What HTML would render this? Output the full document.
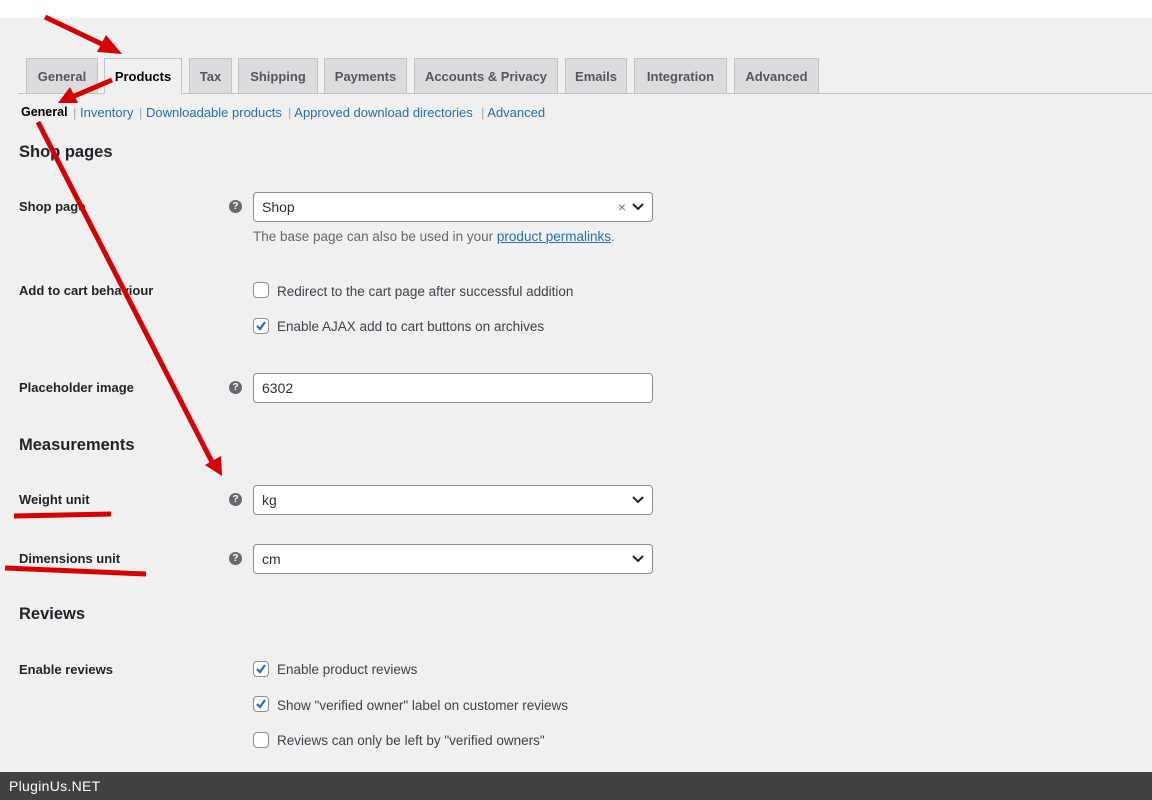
<!DOCTYPE html>
<html><head><meta charset="utf-8"><style>
*{box-sizing:border-box;margin:0;padding:0}
body{width:1152px;height:800px;position:relative;overflow:hidden;background:#fff;font-family:"Liberation Sans",sans-serif;color:#1d2327;font-size:13px}
.bg{position:absolute;left:0;top:18px;width:1152px;height:754px;background:#f0f0f1}
.a{position:absolute;white-space:nowrap}
.tab{position:absolute;top:58px;height:35px;background:#dcdcde;border:1px solid #c3c4c7;border-bottom:none;color:#50575e;font-weight:bold;font-size:13px;text-align:center;line-height:35px}
.tab.on{background:#f0f0f1;color:#000;height:36px;z-index:2}
.line{position:absolute;left:18px;top:93px;width:1134px;height:1px;background:#c3c4c7}
.sub{position:absolute;top:105px;font-size:13px;color:#2271b1}
.h2{position:absolute;left:19px;font-size:16.5px;font-weight:600;color:#1d2327}
.lbl{position:absolute;left:19px;font-size:13px;font-weight:bold;color:#1d2327}
.q{position:absolute;left:229px;width:13px;height:13px;border-radius:50%;background:#646970;color:#fff;font-size:10px;font-weight:bold;text-align:center;line-height:13px}
.inp{position:absolute;left:253px;width:400px;height:30px;background:#fff;border:1px solid #8c8f94;border-radius:4px;font-size:14px;line-height:28px;padding-left:8px;color:#2c3338}
.chev{position:absolute;right:8px;top:10px}
.cb{position:absolute;left:253px;width:16px;height:16px;background:#fff;border:1px solid #8c8f94;border-radius:4px}
.cbt{position:absolute;left:277px;font-size:13.5px;color:#3c434a}
.foot{position:absolute;left:0;top:772px;width:1152px;height:28px;background:#414141;color:#fff;font-size:14px;line-height:28px;padding-left:9px;letter-spacing:.3px}
</style></head><body>
<div class="bg"></div>
<div class="tab" style="left:26px;width:72px">General</div>
<div class="tab on" style="left:104px;width:78px">Products</div>
<div class="tab" style="left:189px;width:43px">Tax</div>
<div class="tab" style="left:238px;width:80px">Shipping</div>
<div class="tab" style="left:324px;width:83px">Payments</div>
<div class="tab" style="left:414px;width:144px">Accounts &amp; Privacy</div>
<div class="tab" style="left:565px;width:62px">Emails</div>
<div class="tab" style="left:634px;width:93px">Integration</div>
<div class="tab" style="left:734px;width:85px">Advanced</div>
<div class="line"></div>
<div class="sub" style="left:21px;color:#000;font-weight:bold;font-size:12.5px">General</div>
<div class="sub" style="left:73px"><span style="color:#a7aaad">|</span> Inventory</div>
<div class="sub" style="left:139px"><span style="color:#a7aaad">|</span> Downloadable products</div>
<div class="sub" style="left:288px"><span style="color:#a7aaad">|</span> Approved download directories</div>
<div class="sub" style="left:481px"><span style="color:#a7aaad">|</span> Advanced</div>

<div class="h2" style="top:143px">Shop pages</div>
<div class="lbl" style="top:199px">Shop page</div>
<div class="q" style="top:200px">?</div>
<div class="inp" style="top:192px">Shop<span style="position:absolute;right:26px;color:#777;font-size:14px">×</span><svg class="chev" width="12" height="8" viewBox="0 0 12 8"><path d="M1 1l5 5 5-5" stroke="#1d2327" stroke-width="2" fill="none"/></svg></div>
<div class="a" style="left:253px;top:229px;font-size:13.5px;color:#646970">The base page can also be used in your <span style="color:#2271b1;text-decoration:underline">product permalinks</span>.</div>

<div class="lbl" style="top:283px">Add to cart behaviour</div>
<div class="cb" style="top:282px"></div><div class="cbt" style="top:284px">Redirect to the cart page after successful addition</div>
<div class="cb" style="top:318px"><svg width="14" height="14" viewBox="0 0 14 14"><path d="M3 7l3 3 5-7" stroke="#2271b1" stroke-width="2.2" fill="none"/></svg></div><div class="cbt" style="top:319px">Enable AJAX add to cart buttons on archives</div>

<div class="lbl" style="top:380px">Placeholder image</div>
<div class="q" style="top:381px">?</div>
<div class="inp" style="top:373px">6302</div>

<div class="h2" style="top:436px">Measurements</div>
<div class="lbl" style="top:492px">Weight unit</div>
<div class="q" style="top:493px">?</div>
<div class="inp" style="top:485px">kg<svg class="chev" width="12" height="8" viewBox="0 0 12 8"><path d="M1 1l5 5 5-5" stroke="#1d2327" stroke-width="2" fill="none"/></svg></div>
<div class="lbl" style="top:551px">Dimensions unit</div>
<div class="q" style="top:552px">?</div>
<div class="inp" style="top:544px">cm<svg class="chev" width="12" height="8" viewBox="0 0 12 8"><path d="M1 1l5 5 5-5" stroke="#1d2327" stroke-width="2" fill="none"/></svg></div>

<div class="h2" style="top:605px">Reviews</div>
<div class="lbl" style="top:662px">Enable reviews</div>
<div class="cb" style="top:661px"><svg width="14" height="14" viewBox="0 0 14 14"><path d="M3 7l3 3 5-7" stroke="#2271b1" stroke-width="2.2" fill="none"/></svg></div><div class="cbt" style="top:662px">Enable product reviews</div>
<div class="cb" style="top:696px"><svg width="14" height="14" viewBox="0 0 14 14"><path d="M3 7l3 3 5-7" stroke="#2271b1" stroke-width="2.2" fill="none"/></svg></div><div class="cbt" style="top:698px">Show "verified owner" label on customer reviews</div>
<div class="cb" style="top:732px"></div><div class="cbt" style="top:733px">Reviews can only be left by "verified owners"</div>

<svg style="position:absolute;left:0;top:0;z-index:5" width="1152" height="800">
<g stroke="#d80000" stroke-width="5" fill="none" stroke-linecap="butt">
<line x1="45" y1="17" x2="108" y2="47"/>
<line x1="112" y1="80" x2="72" y2="97"/>
<line x1="38" y1="122" x2="212" y2="462"/>
<line x1="14" y1="516" x2="111" y2="514"/>
<line x1="5" y1="568" x2="146" y2="574"/>
</g>
<g fill="#d80000">
<polygon points="122,54 97,52 106,35"/>
<polygon points="58,103 70,87 78,103"/>
<polygon points="222,476 205,465 221,456"/>
</g>
</svg>
<div class="foot">PluginUs.NET</div>
</body></html>
